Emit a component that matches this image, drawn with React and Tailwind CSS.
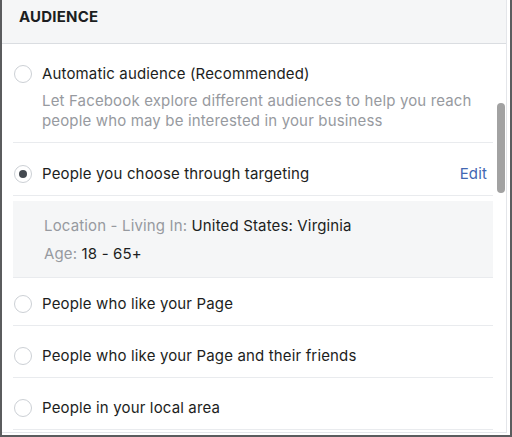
import React from 'react'

// Audience picker panel (ad targeting)

const Radio = ({ checked }) => (
  <span className="mt-px flex h-[18px] w-[18px] shrink-0 items-center justify-center rounded-full border border-[#ccd0d5] bg-white">
    {checked && <span className="h-[8px] w-[8px] rounded-full bg-[#444950]" />}
  </span>
)

const Option = ({ label, checked, children, right, className = '' }) => (
  <div className={`border-b border-[#e9ebee] pb-[11px] ${className}`}>
    <div className="flex items-start gap-[10px] pl-px">
      <Radio checked={checked} />
      <div className="flex-1">
        <div className="flex items-center justify-between">
          <span className="text-[15px] leading-5 tracking-[0.15px] text-[#1c1e21]">{label}</span>
          {right}
        </div>
        {children}
      </div>
    </div>
  </div>
)

export default function App() {
  return (
    <div
      className="h-[437px] w-[512px] overflow-hidden border-x-2 border-b-2 border-[#5b5c5e] bg-white"
      style={{ fontFamily: 'Inter, "Liberation Sans", Arial, sans-serif' }}
    >
      <div className="relative mr-[3px] h-[433px] border-r border-b border-[#e4e6ea]">
        {/* header */}
        <div className="flex h-[44px] items-center border-b border-[#dadde1] bg-[#f5f6f7] pb-[9px] pl-[17px]">
          <span className="text-[15px] font-bold tracking-[0.2px] text-[#1c1e21]">AUDIENCE</span>
        </div>

        {/* scrollbar thumb */}
        <div className="absolute top-[103px] right-[1px] h-[90px] w-[8px] rounded-full bg-[#a2a2a2]" />

        <div className="pr-[13px] pl-[11px]">
          <Option label="Automatic audience (Recommended)" className="pt-[20px]">
            <p className="mt-[7px] text-[15px] leading-5 tracking-[0.15px] text-[#979aa0]">
              Let Facebook explore different audiences to help you reach people who may be interested in your business
            </p>
          </Option>

          <Option
            label="People you choose through targeting"
            checked
            className="pt-[21px]"
            right={<span className="pr-[6px] text-[15px] leading-5 tracking-[0.15px] text-[#4267b2]">Edit</span>}
          />

          <div className="mt-[5px] border-b border-[#e9ebee] bg-[#f5f6f7] pt-[15px] pb-[13px] pl-[31px] text-[15px] leading-5 tracking-[0.15px]">
            <div>
              <span className="text-[#979aa0]">Location - Living In: </span>
              <span className="text-[#1c1e21]">United States: Virginia</span>
            </div>
            <div className="mt-[8px]">
              <span className="text-[#979aa0]">Age: </span>
              <span className="text-[#1c1e21]">18 - 65+</span>
            </div>
          </div>

          <Option label="People who like your Page" className="pt-[16px]" />
          <Option label="People who like your Page and their friends" className="pt-[20px]" />
          <Option label="People in your local area" className="pt-[20px]" />
        </div>
      </div>
    </div>
  )
}
